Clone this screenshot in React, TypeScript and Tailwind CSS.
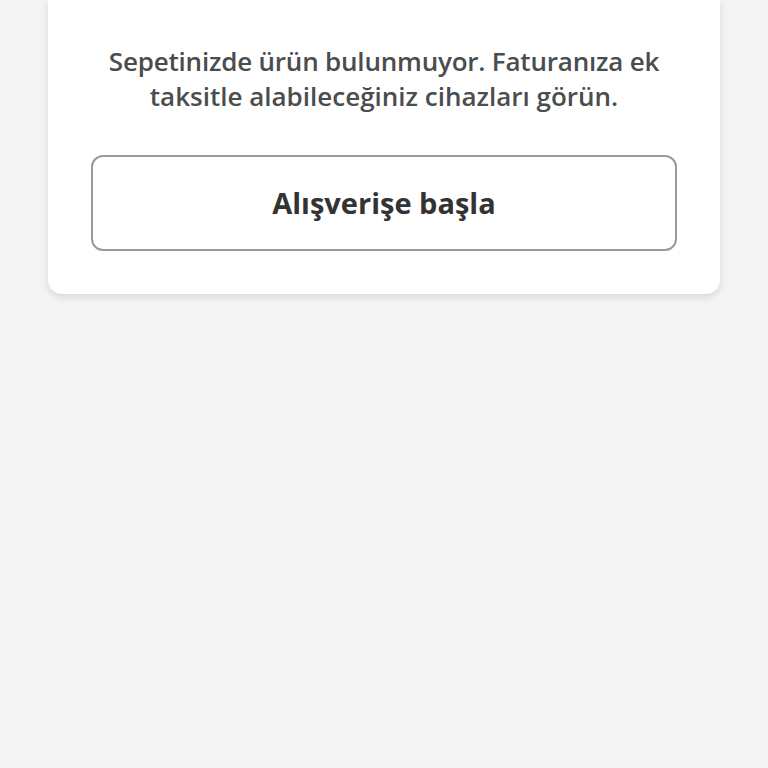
import React from "react";

export default function App() {
  return (
    <div className="min-h-[768px] w-full bg-[#f4f4f4]" style={{ fontFamily: "'Open Sans', 'Noto Sans', sans-serif" }}>
      <div className="mx-[48px] rounded-b-[14px] bg-white px-[43px] pt-[44px] pb-[43px] shadow-[0_3px_8px_rgba(0,0,0,0.12)]">
        <p className="text-center text-[26px] font-semibold leading-[35px] tracking-[-0.2px] text-[#4a4d4e]">
          Sepetinizde ürün bulunmuyor. Faturanıza ek
          <br />
          <span className="tracking-[0px]">taksitle alabileceğiniz cihazları görün.</span>
        </p>
        <button className="mt-[41px] flex h-[96px] w-full items-center justify-center rounded-[12px] border-2 border-[#9a9a9a] bg-white text-[29px] font-bold text-[#333333]">
          Alışverişe başla
        </button>
      </div>
    </div>
  );
}
